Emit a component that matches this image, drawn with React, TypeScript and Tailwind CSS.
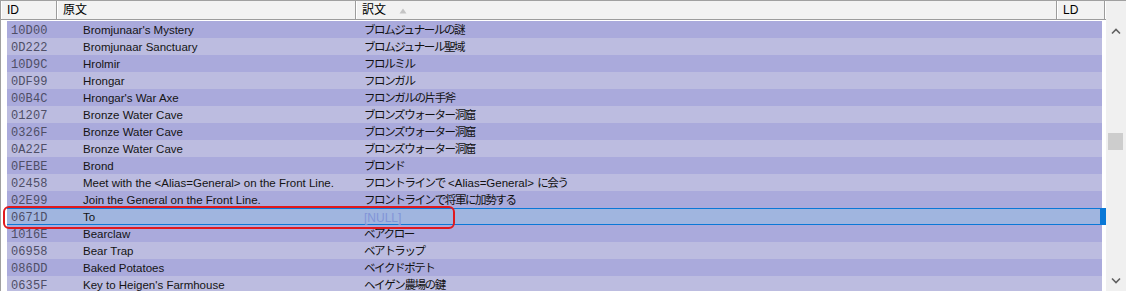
import React from "react";

type Row = { id: string; src: string; dst: string; sel?: boolean };

const rows: Row[] = [
  { id: "10D00", src: "Bromjunaar's Mystery", dst: "ブロムジュナールの謎" },
  { id: "0D222", src: "Bromjunaar Sanctuary", dst: "ブロムジュナール聖域" },
  { id: "10D9C", src: "Hrolmir", dst: "フロルミル" },
  { id: "0DF99", src: "Hrongar", dst: "フロンガル" },
  { id: "00B4C", src: "Hrongar's War Axe", dst: "フロンガルの片手斧" },
  { id: "01207", src: "Bronze Water Cave", dst: "ブロンズウォーター洞窟" },
  { id: "0326F", src: "Bronze Water Cave", dst: "ブロンズウォーター洞窟" },
  { id: "0A22F", src: "Bronze Water Cave", dst: "ブロンズウォーター洞窟" },
  { id: "0FEBE", src: "Brond", dst: "ブロンド" },
  { id: "02458", src: "Meet with the <Alias=General> on the Front Line.", dst: "フロントラインで <Alias=General> に会う" },
  { id: "02E99", src: "Join the General on the Front Line.", dst: "フロントラインで将軍に加勢する" },
  { id: "0671D", src: "To", dst: "[NULL]", sel: true },
  { id: "1016E", src: "Bearclaw", dst: "ベアクロー" },
  { id: "06958", src: "Bear Trap", dst: "ベアトラップ" },
  { id: "086DD", src: "Baked Potatoes", dst: "ベイクドポテト" },
  { id: "0635F", src: "Key to Heigen's Farmhouse", dst: "ヘイゲン農場の鍵" },
];

const sans = "font-['Liberation_Sans','Noto_Sans_CJK_JP',sans-serif]";

function HeaderCell({ w, children }: { w: string; children: React.ReactNode }) {
  return (
    <div
      className={`${w} h-full flex items-center pl-[5px] bg-[#f2f2f2] border-l border-l-white border-r border-r-[#9c9c9c] text-[12px] text-black`}
    >
      {children}
    </div>
  );
}

function JpText({ text }: { text: string }) {
  const parts = text.split(/( ?[\x21-\x7e][\x20-\x7e]*[\x21-\x7e] ?)/).filter((p) => p.length > 0);
  return (
    <>
      {parts.map((p, i) =>
        /[\x21-\x7e]/.test(p) ? (
          <span key={i} className="tracking-normal whitespace-pre">
            {p}
          </span>
        ) : (
          <span key={i}>{p}</span>
        )
      )}
    </>
  );
}

export default function App() {
  return (
    <div className={`w-[1126px] h-[291px] overflow-hidden bg-white relative ${sans}`}>
      <div className="flex h-full border-t border-[#a0a0a0]">
        {/* main list */}
        <div className="w-[1106px] flex flex-col border-l border-[#a0a0a0]">
          <div className="h-[19px] flex border-b border-[#9c9c9c] shrink-0">
            <HeaderCell w="w-[56px]">ID</HeaderCell>
            <HeaderCell w="w-[299px]">原文</HeaderCell>
            <HeaderCell w="w-[701px]">
              <span>訳文</span>
              <svg width="8" height="6" viewBox="0 0 8 6" className="ml-[13px] mt-[1px]">
                <path d="M4 0.5 L7.5 5.5 L0.5 5.5 Z" fill="#c4c4c4" />
              </svg>
            </HeaderCell>
            <HeaderCell w="w-[48px]">LD</HeaderCell>
          </div>
          <div className="pl-[6px] pr-[4px] pt-[1px] flex flex-col">
            {rows.map((r, i) => {
              const bg = r.sel
                ? "bg-[#a0b5df] border-y border-[#0a78d7] pt-[2px]"
                : i % 2 === 0
                ? "bg-[#aaaadc] pt-[3px]"
                : "bg-[#bcbce0] pt-[3px]";
              return (
                <div key={r.id} className={`h-[17px] shrink-0 flex items-center relative ${bg}`}>
                  <div className="w-[70px] pl-[4px] font-['Liberation_Mono',monospace] text-[12px] text-[#4e4e66] tracking-[0.1px]">
                    {r.id}
                  </div>
                  <div className="w-[282px] pl-[6px] text-[11.5px] text-[#141414] whitespace-nowrap">{r.src}</div>
                  <div
                    className={`pl-[5px] whitespace-nowrap ${
                      r.sel
                        ? "text-[#8094d8] text-[12px] font-['Liberation_Sans_Narrow','Liberation_Sans',sans-serif]"
                        : "text-[#111] text-[11.5px] tracking-[-1.4px]"
                    }`}
                  >
                    {r.sel ? r.dst : <JpText text={r.dst} />}
                  </div>
                  {r.sel && (
                    <div className="absolute right-[-4px] top-[-1px] w-[6px] h-[17px] bg-[#0a78d7]" />
                  )}
                </div>
              );
            })}
          </div>
        </div>
        {/* scrollbar */}
        <div className="w-[20px] flex flex-col items-center bg-[#f0f0f0] pr-[2px] pl-[1px]">
          <div className="h-[21px] w-full" />
          <svg width="10" height="7" viewBox="0 0 10 7" className="mt-[6px]">
            <path d="M1 5.5 L5 1.5 L9 5.5" stroke="#606060" strokeWidth="1.6" fill="none" />
          </svg>
          <div className="mt-[98px] w-[15px] h-[17px] bg-[#cdcdcd]" />
          <div className="flex-1" />
          <svg width="10" height="7" viewBox="0 0 10 7" className="mb-[7px]">
            <path d="M1 1.5 L5 5.5 L9 1.5" stroke="#606060" strokeWidth="1.6" fill="none" />
          </svg>
        </div>
      </div>
      {/* red highlight */}
      <div className="absolute left-[3px] top-[206px] w-[452px] h-[23px] border-2 border-[#e0191e] rounded-[6px]" />
    </div>
  );
}
